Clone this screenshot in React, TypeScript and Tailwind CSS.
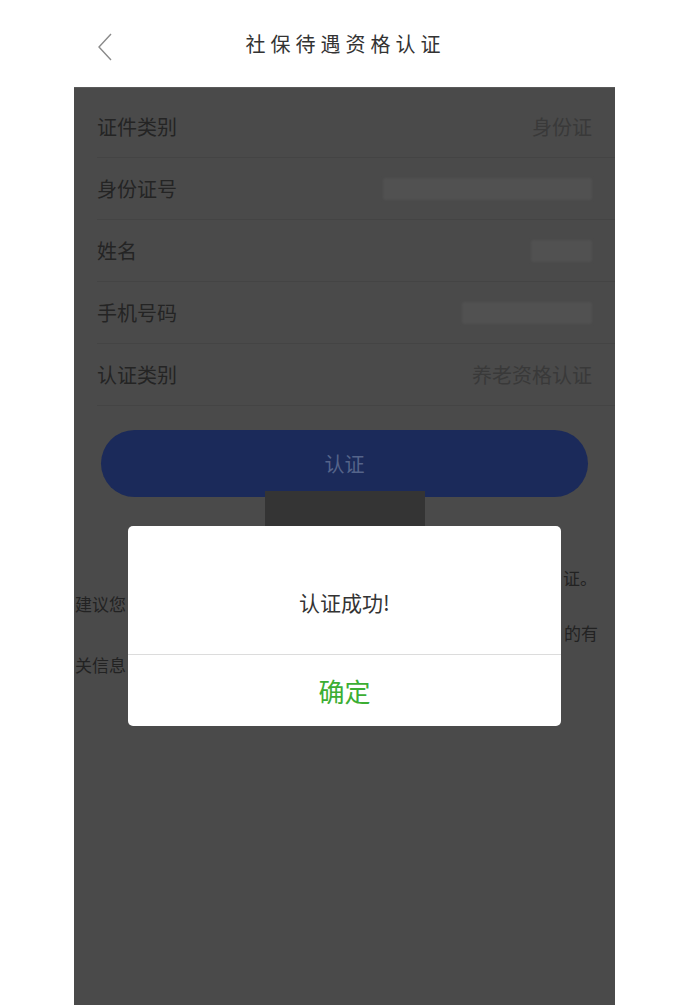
import React from 'react';

const rows = [
  { label: '证件类别', value: '身份证' },
  { label: '身份证号', blur: 'w-[209px]' },
  { label: '姓名', blur: 'w-[61px]' },
  { label: '手机号码', blur: 'w-[130px]' },
  { label: '认证类别', value: '养老资格认证' },
];

export default function App() {
  return (
    <div
      className="relative w-[677px] h-[1005px] bg-white overflow-hidden"
      style={{ fontFamily: '"Noto Sans CJK SC", "Noto Sans", sans-serif' }}
    >
      {/* header */}
      <header className="h-[87px] flex items-center relative">
        <svg className="absolute left-[96px] top-[32px]" width="18" height="30" viewBox="0 0 18 30">
          <path d="M15 2 L3 15 L15 28" fill="none" stroke="#8a8a8a" strokeWidth="1.4" />
        </svg>
        <h1 className="w-full text-center text-[20px] tracking-[5px] text-[#333] pl-[14px]">
          社保待遇资格认证
        </h1>
      </header>

      {/* dimmed page */}
      <div className="relative ml-[74px] w-[541px] h-[918px] bg-[#4a4a4a] border-t border-[#5a5a5a]">
        <div className="pt-[8px]">
          {rows.map((r) => (
            <div
              key={r.label}
              className="ml-[23px] h-[62px] flex items-center justify-between border-b border-[#444] pr-[23px]"
            >
              <span className="text-[20px] text-[#242424]">{r.label}</span>
              {r.value ? (
                <span className="text-[20px] text-[#393939]">{r.value}</span>
              ) : (
                <span className={`${r.blur} h-[22px] bg-[#515151] blur-[1px] rounded-[2px]`}></span>
              )}
            </div>
          ))}
        </div>

        <div className="mx-[27px] mt-[24px] h-[67px] rounded-full bg-[#1b2a5a] flex items-center justify-center">
          <span className="text-[20px] text-[#55648a]">认证</span>
        </div>

        <div className="mt-[67px] pl-[1px] pr-[17px] text-[17px] text-[#222] whitespace-pre">
          <div className="h-[28px] leading-[28px] flex justify-end pr-[1px]">
            <span>请按时完成资格认 证。</span>
          </div>
          <div className="h-[24px] leading-[24px] flex justify-start">
            <span>建议您  每年定期进行</span>
          </div>
          <div className="h-[34px] leading-[34px] flex justify-end">
            <span>请咨询当地社保机构  的有</span>
          </div>
          <div className="h-[30px] leading-[30px] flex justify-start">
            <span>关信息  服务</span>
          </div>
        </div>

        {/* toast remnant */}
        <div className="absolute left-[191px] top-[403px] w-[160px] h-[37px] bg-[#343434]"></div>

        {/* dialog */}
        <div className="absolute left-[54px] top-[438px] w-[433px] h-[200px] bg-white rounded-[5px] flex flex-col">
          <div className="h-[129px] flex items-center justify-center pt-[26px] border-b border-[#dcdcdc]">
            <span className="text-[21px] text-[#333]">认证成功!</span>
          </div>
          <div className="flex-1 flex items-center justify-center">
            <span className="text-[26px] text-[#3cae33]">确定</span>
          </div>
        </div>
      </div>
    </div>
  );
}
